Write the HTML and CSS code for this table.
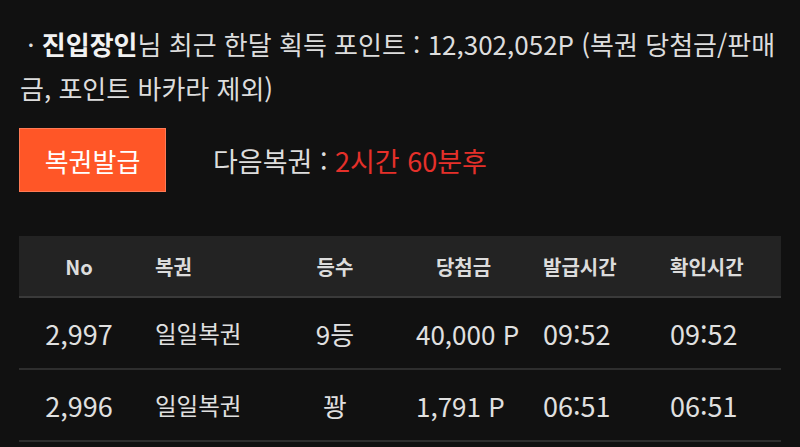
FILE: index.html
```html
<!DOCTYPE html>
<html lang="ko">
<head>
<meta charset="utf-8">
<link rel="stylesheet" href="styles.css">
</head>
<body>
<div class="page">
  <p class="summary">&nbsp;· <b>진입장인</b>님 최근 한달 획득 포인트 : 12,302,052P (복권 당첨금/판매금, 포인트 바카라 제외)</p>
  <div class="action">
    <button class="issue">복권발급</button>
    <span class="next">다음복권 : <span class="red">2시간 60분후</span></span>
  </div>
  <div class="table">
    <div class="row head">
      <div class="c c1">No</div>
      <div class="c c2">복권</div>
      <div class="c c3">등수</div>
      <div class="c c4">당첨금</div>
      <div class="c c5">발급시간</div>
      <div class="c c6">확인시간</div>
    </div>
    <div class="row">
      <div class="c c1">2,997</div>
      <div class="c c2">일일복권</div>
      <div class="c c3">9등</div>
      <div class="c c4">40,000 P</div>
      <div class="c c5">09:52</div>
      <div class="c c6">09:52</div>
    </div>
    <div class="row">
      <div class="c c1">2,996</div>
      <div class="c c2">일일복권</div>
      <div class="c c3">꽝</div>
      <div class="c c4">1,791 P</div>
      <div class="c c5">06:51</div>
      <div class="c c6">06:51</div>
    </div>
  </div>
</div>
</body>
</html>
```
FILE: styles.css
```css
html, body {
  margin: 0;
  padding: 0;
  background: #111111;
}
body {
  font-family: "Noto Sans CJK KR", "Noto Sans", sans-serif;
  color: #e2e2e2;
  overflow: hidden;
}
.page {
  padding: 22px 19px 0 19px;
  width: 762px;
}
.summary {
  margin: 0;
  font-size: 26px;
  line-height: 44px;
  padding-left: 1px;
  color: #dddddd;
}
.summary b {
  color: #f2f2f2;
  font-weight: 700;
}
.action {
  display: flex;
  align-items: center;
  margin-top: 18px;
  gap: 47px;
}
.issue {
  width: 147px;
  height: 64px;
  background: #ff5627;
  border: 1px solid #ff7a55;
  color: #ffffff;
  font-family: inherit;
  font-size: 26px;
  padding: 0;
  cursor: pointer;
}
.next {
  font-size: 27px;
  color: #dddddd;
}
.red {
  color: #e5302a;
}
.table {
  margin-top: 44px;
}
.row {
  display: grid;
  grid-template-columns: 120px 131px 130px 127px 127px 127px;
  height: 70px;
  align-items: center;
  border-bottom: 2px solid #2e2e2e;
  font-size: 27px;
  color: #e0e0e0;
}
.row .c2 {
  font-size: 23.5px;
}
.row .c3,
.row .c4 {
  font-size: 26px;
}
.row.head {
  height: 60px;
  background: #232323;
  border-bottom: 2px solid #3a3a3a;
  font-size: 20px;
  font-weight: 700;
  color: #dcdcdc;
}
.row.head .c {
  font-size: 20px;
}
.c {
  padding-left: 16px;
  white-space: nowrap;
}
.c1, .c3 {
  text-align: center;
  padding-left: 0;
}
.head .c4 {
  text-align: center;
  padding-left: 0;
}
```
